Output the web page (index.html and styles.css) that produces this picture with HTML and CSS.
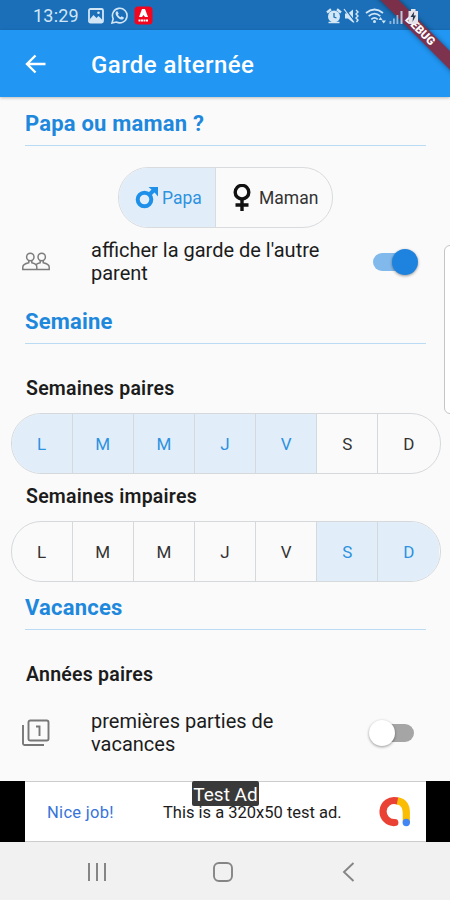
FILE: index.html
```html
<!DOCTYPE html>
<html lang="fr">
<head>
<meta charset="utf-8">
<title>Garde alternée</title>
<link rel="stylesheet" href="styles.css">
</head>
<body>
<div class="screen">
  <div class="status">
    <span class="clock">13:29</span>
    <svg class="st-photo" width="16" height="16" viewBox="0 0 16 16"><rect x="1" y="1" width="14" height="13.500" rx="1.500" fill="none" stroke="#d2e6f6" stroke-width="1.800"/><path d="M2 14V11l3.500-4 3 3 2-2 4 4v2z" fill="#d2e6f6"/><circle cx="10.500" cy="4.800" r="1.300" fill="#d2e6f6"/></svg>
    <svg class="st-phone" width="17" height="17" viewBox="0 0 17 17"><path d="M1 16l1.200-4.200A7.300 7.300 0 1 1 5.300 15z" fill="none" stroke="#d2e6f6" stroke-width="1.600"/><path d="M5.200 4.600l1.300-.4 1.200 2.500-.8 1c.6 1.200 1.500 2 2.600 2.600l1.100-1 2.300 1.200c0 1.500-1.200 2.200-2.500 2C7.500 12 4.800 9 4.600 6.500c0-.8.200-1.400.6-1.900z" fill="#d2e6f6"/></svg>
    <svg class="st-app" width="19" height="19" viewBox="0 0 19 19"><rect x=".5" y=".5" width="18" height="18" rx="3.500" fill="#f3061d"/><path d="M5 11l3-8h3l3 8h-3l-1.500-2L8 11z" fill="#fff"/><path d="M4.500 14.500h10" stroke="#fff" stroke-width="2" stroke-dasharray="2 .5"/></svg>
    <span class="grow"></span>
    <svg class="st-right" width="98" height="20" viewBox="0 0 98 20">
      <g fill="none" stroke="#d2e6f6"><path d="M2 6.500l4-3.200M12 3.300l4 3.200" stroke-width="2.400"/><path d="M3.500 16.500h11" stroke-width="1.500"/></g>
      <circle cx="9" cy="10.500" r="6" fill="#d2e6f6"/><path d="M9 7v4l2.500 1" fill="none" stroke="#1b6eb7" stroke-width="1.300"/>
      <path d="M20 7.500h3l5-4v13l-5-4h-3z" fill="#d2e6f6"/><path d="M20 3l10 13" stroke="#1b6eb7" stroke-width="1.500"/><path d="M19 3l10 13.500" stroke="#d2e6f6" stroke-width="1.200"/><path d="M31 4l2 2-2 2 2 2-2 2 2 2-1.500 2" fill="none" stroke="#d2e6f6" stroke-width="1.400"/>
      <g fill="none" stroke="#d2e6f6" stroke-width="1.700"><path d="M41 7q8.500-7 17 0"/><path d="M43.700 10.200q5.800-5 11.600 0"/><path d="M46.300 13.300q3.200-2.800 6.400 0"/></g><circle cx="49.500" cy="15.500" r="1.500" fill="#d2e6f6"/><path d="M53.500 14l2-3 2 3zM56.500 14.500h4.500L58.700 17.500z" fill="#d2e6f6"/>
      <path d="M64.500 15h1.800v3h-1.800zM68 12.500h1.800V18H68zM71.500 9h1.800v9h-1.800z" fill="#8db7dc"/><path d="M75.500 5h2v13h-2z" fill="#bccbdc"/>
      <path d="M83.500 5H86V3h4.500v2H93v13h-9.500z" fill="#e7e3ea"/><path d="M89.200 5.500l-3.700 5.500h2.500l-.5 5 3.500-6.500h-2.300z" fill="#26384f"/>
    </svg>
  </div>
  <header class="appbar">
    <svg class="back" width="22" height="20" viewBox="0 0 22 20"><path d="M20.500 10H2M10.500 1.500L2 10l8.500 8.500" fill="none" stroke="#fff" stroke-width="2.400"/></svg>
    <h1>Garde alternée</h1>
  </header>
  <main>
    <h2 class="s1">Papa ou maman ?</h2>
    <div class="parents">
      <div class="parent on"><svg width="24" height="24" viewBox="0 0 24 24"><g fill="none" stroke="#1e90ea" stroke-width="4"><circle cx="9.500" cy="13.500" r="6.800"/><path d="M14.500 8.500l5-5"/></g><path d="M13.500 1H23v9.500l-3-3.500-3-3z" fill="#1e90ea"/></svg><span>Papa</span></div>
      <div class="parent"><svg width="18" height="28" viewBox="0 0 18 28"><g fill="none" stroke="#111" stroke-width="3.400"><circle cx="9" cy="8.200" r="6.800"/><path d="M9 15V27M2.500 21h13"/></g></svg><span>Maman</span></div>
    </div>
    <div class="row">
      <svg class="lead" width="28" height="20" viewBox="0 0 28 20"><g fill="none" stroke="#7d7d7d" stroke-width="1.500"><circle cx="8.300" cy="5" r="3.700"/><circle cx="19.700" cy="5" r="3.700"/><path d="M6.800 8.500v2.200Q.8 12 .8 15v2.500h26.400V15q0-3-6-4.300V8.500M9.800 8.500v2.200q3.200.6 4.200 2 1-1.400 4.200-2V8.500M14 12.700q.8 1 .8 2.300v2.500"/></g></svg>
      <p>afficher la garde de l'autre<br>parent</p>
      <span class="switch on"><i></i></span>
    </div>
    <h2 class="s2">Semaine</h2>
    <h3 class="a1">Semaines paires</h3>
    <div class="days"><b class="on">L</b><b class="on">M</b><b class="on">M</b><b class="on">J</b><b class="on">V</b><b>S</b><b>D</b></div>
    <h3 class="a2">Semaines impaires</h3>
    <div class="days"><b>L</b><b>M</b><b>M</b><b>J</b><b>V</b><b class="on">S</b><b class="on">D</b></div>
    <h2 class="s3">Vacances</h2>
    <h3 class="a3">Années paires</h3>
    <div class="row last">
      <svg class="lead" width="28" height="28" viewBox="0 0 28 28"><g fill="none" stroke="#777" stroke-width="1.900"><rect x="6.500" y="1.500" width="20" height="20" rx="1.800"/><path d="M1 6v18.500q0 1.500 1.500 1.500H22M14 7.500h3.500v9.500"/></g></svg>
      <p>premières parties de<br>vacances</p>
      <span class="switch"><i></i></span>
    </div>
  </main>
  <div class="ad">
    <div class="banner">
      <span class="nice">Nice job!</span>
      <span class="copy">This is a 320x50 test ad.</span>
      <svg width="32" height="32" viewBox="0 0 32 32"><g fill="none" stroke-width="7.200"><path d="M17.500 4.800A11 11 0 1 0 15.800 26.500" stroke="#e94235" stroke-linecap="round"/><path d="M18.500 4.700Q27.300 6.500 27.300 16.500V26" stroke="#fbbc04"/></g><circle cx="27.300" cy="26.500" r="3.700" fill="#4285f4"/></svg>
    </div>
    <span class="tag">Test Ad</span>
  </div>
  <nav>
    <svg width="20" height="20" viewBox="0 0 20 20"><path d="M2 1v18M10 1v18M18 1v18" stroke="#858585" stroke-width="2"/></svg>
    <svg width="20" height="20" viewBox="0 0 20 20"><rect x="1" y="1" width="18" height="18" rx="5" fill="none" stroke="#858585" stroke-width="1.900"/></svg>
    <svg width="20" height="20" viewBox="0 0 20 20"><path d="M14.500 1L5 10l9.500 9" fill="none" stroke="#858585" stroke-width="1.900"/></svg>
  </nav>
  <div class="handle"></div>
  <div class="corner"><span>DEBUG</span></div>
</div>
</body>
</html>
```
FILE: styles.css
```css
* { box-sizing: border-box; }
body { margin: 0; font-family: Roboto, sans-serif; color: #1c1c1c; }
.screen { position: relative; width: 450px; height: 900px; overflow: hidden; background: linear-gradient(#1a6fb8 30px, #fafafa 30px); display: flex; flex-direction: column; }
h1, h2, h3, p { margin: 0; }
svg { flex: none; display: block; }
.grow { flex: 1; }
.status { position: relative; z-index: 2; height: 30px; display: flex; align-items: center; padding: 1px 27px 0 33px; flex: none; }
.clock { color: #d2e6f6; font-size: 18px; letter-spacing: 0.2px; width: 55px; white-space: nowrap; }
.st-phone { margin-left: 7px; }
.st-app { margin-left: 6px; }
.appbar { height: 67px; flex: none; background: #2196f3; display: flex; align-items: center; padding-left: 25px; box-shadow: 0 1px 3px rgba(0,0,0,.25); }
h1 { margin-left: 44px; color: #fff; font-size: 24px; font-weight: 500; letter-spacing: 0.420px; white-space: nowrap; line-height: 28px; padding-top: 2px; }
main { flex: none; height: 684px; overflow: hidden; }
h2 { height: 36px; margin: 0 24px 0 25px; border-bottom: 1px solid #b9dbf3; color: #1e88dd; font-size: 22px; font-weight: 700; line-height: 28px; white-space: nowrap; letter-spacing: 0.2px; }
.s1 { margin-top: 13px; }
.s2 { margin-top: 12px; }
.s3 { margin-top: 12px; }
.parents { display: flex; width: 215px; height: 61px; margin: 21px 0 0 118px; border: 1px solid #d9dbdd; border-radius: 30px; overflow: hidden; }
.parent { display: flex; align-items: center; padding-left: 16px; flex: 1; font-size: 17.500px; color: #333; }
.parent.on { flex: 0 0 97px; background: #e1eef9; color: #2d92df; border-right: 1px solid #d5dce2; }
.parent span { margin-left: 4px; }
.parent.on span { margin-left: 3px; }
.parent:last-child { padding-left: 17px; }
.parent:last-child span { margin-left: 8px; }
.row { display: flex; height: 68px; align-items: center; padding: 0 32px 0 22px; }
.last { height: 92px; }
.row p { flex: 1; margin-left: 41px; font-size: 20px; line-height: 23px; white-space: nowrap; }
.switch { width: 45px; height: 26px; display: flex; align-items: center; position: relative; }
.switch::before { content: ""; position: absolute; left: 3px; top: 4px; width: 38px; height: 18px; border-radius: 9px; background: #a5a5a5; }
.switch.on::before { left: 0; background: #82b9ec; }
.switch i { position: relative; margin-left: -4px; width: 26px; height: 26px; border-radius: 50%; background: #fff; box-shadow: 0 1px 3px rgba(0,0,0,.4); }
.switch.on i { margin-left: 19px; background: #1e83de; }
h3 { margin-left: 26px; font-size: 19.500px; font-weight: 600; line-height: 24px; height: 24px; white-space: nowrap; letter-spacing: 0.230px; }
.a1 { margin-top: 33px; }
.a2 { margin-top: 11px; }
.a3 { margin-top: 33px; }
.days { display: grid; grid-template-columns: repeat(7, 1fr); height: 61px; width: 430px; margin: 12px 0 0 10.500px; border: 1px solid #d6d9db; border-radius: 30px; overflow: hidden; }
.days b { display: flex; align-items: center; justify-content: center; font-size: 17px; font-weight: 400; color: #333; border-right: 1px solid #d6d9db; }
.days b:last-child { border-right: 0; }
.days .on { background: #e1eef9; color: #2d92df; }
.ad { height: 61px; flex: none; background: #000; position: relative; }
.banner { width: 401px; height: 61px; margin-left: 25px; background: #fff; border: solid #ccc; border-width: 1px 0; display: flex; align-items: center; padding: 1px 15px 0 22px; }
.nice { width: 116px; font-size: 16.500px; letter-spacing: 0.3px; color: #3674d9; white-space: nowrap; }
.copy { flex: 1; font-size: 16.500px; white-space: nowrap; }
.tag { position: absolute; left: 192px; top: 0; width: 67px; height: 25px; background: #393939; color: #fff; border-radius: 2px; font-size: 19px; line-height: 27px; text-align: center; white-space: nowrap; }
nav { flex: 1; background: #f1f1f1; display: flex; justify-content: space-between; padding: 20px 91px 0 87px; }
.handle { position: absolute; left: 444px; top: 245px; width: 20px; height: 169px; border: 1px solid #c5c5c5; border-radius: 6px; background: #fff; }
.corner { position: absolute; z-index: 1; right: 0; top: 0; width: 90px; height: 90px; overflow: hidden; }
.corner span { position: absolute; left: -10px; top: 24px; width: 140px; height: 13px; transform: rotate(45deg); background: rgba(132,42,64,.93); box-shadow: 0 0 5px rgba(0,0,0,.45); color: #fff; font-size: 11.500px; font-weight: 900; line-height: 13px; text-align: center; }
```
